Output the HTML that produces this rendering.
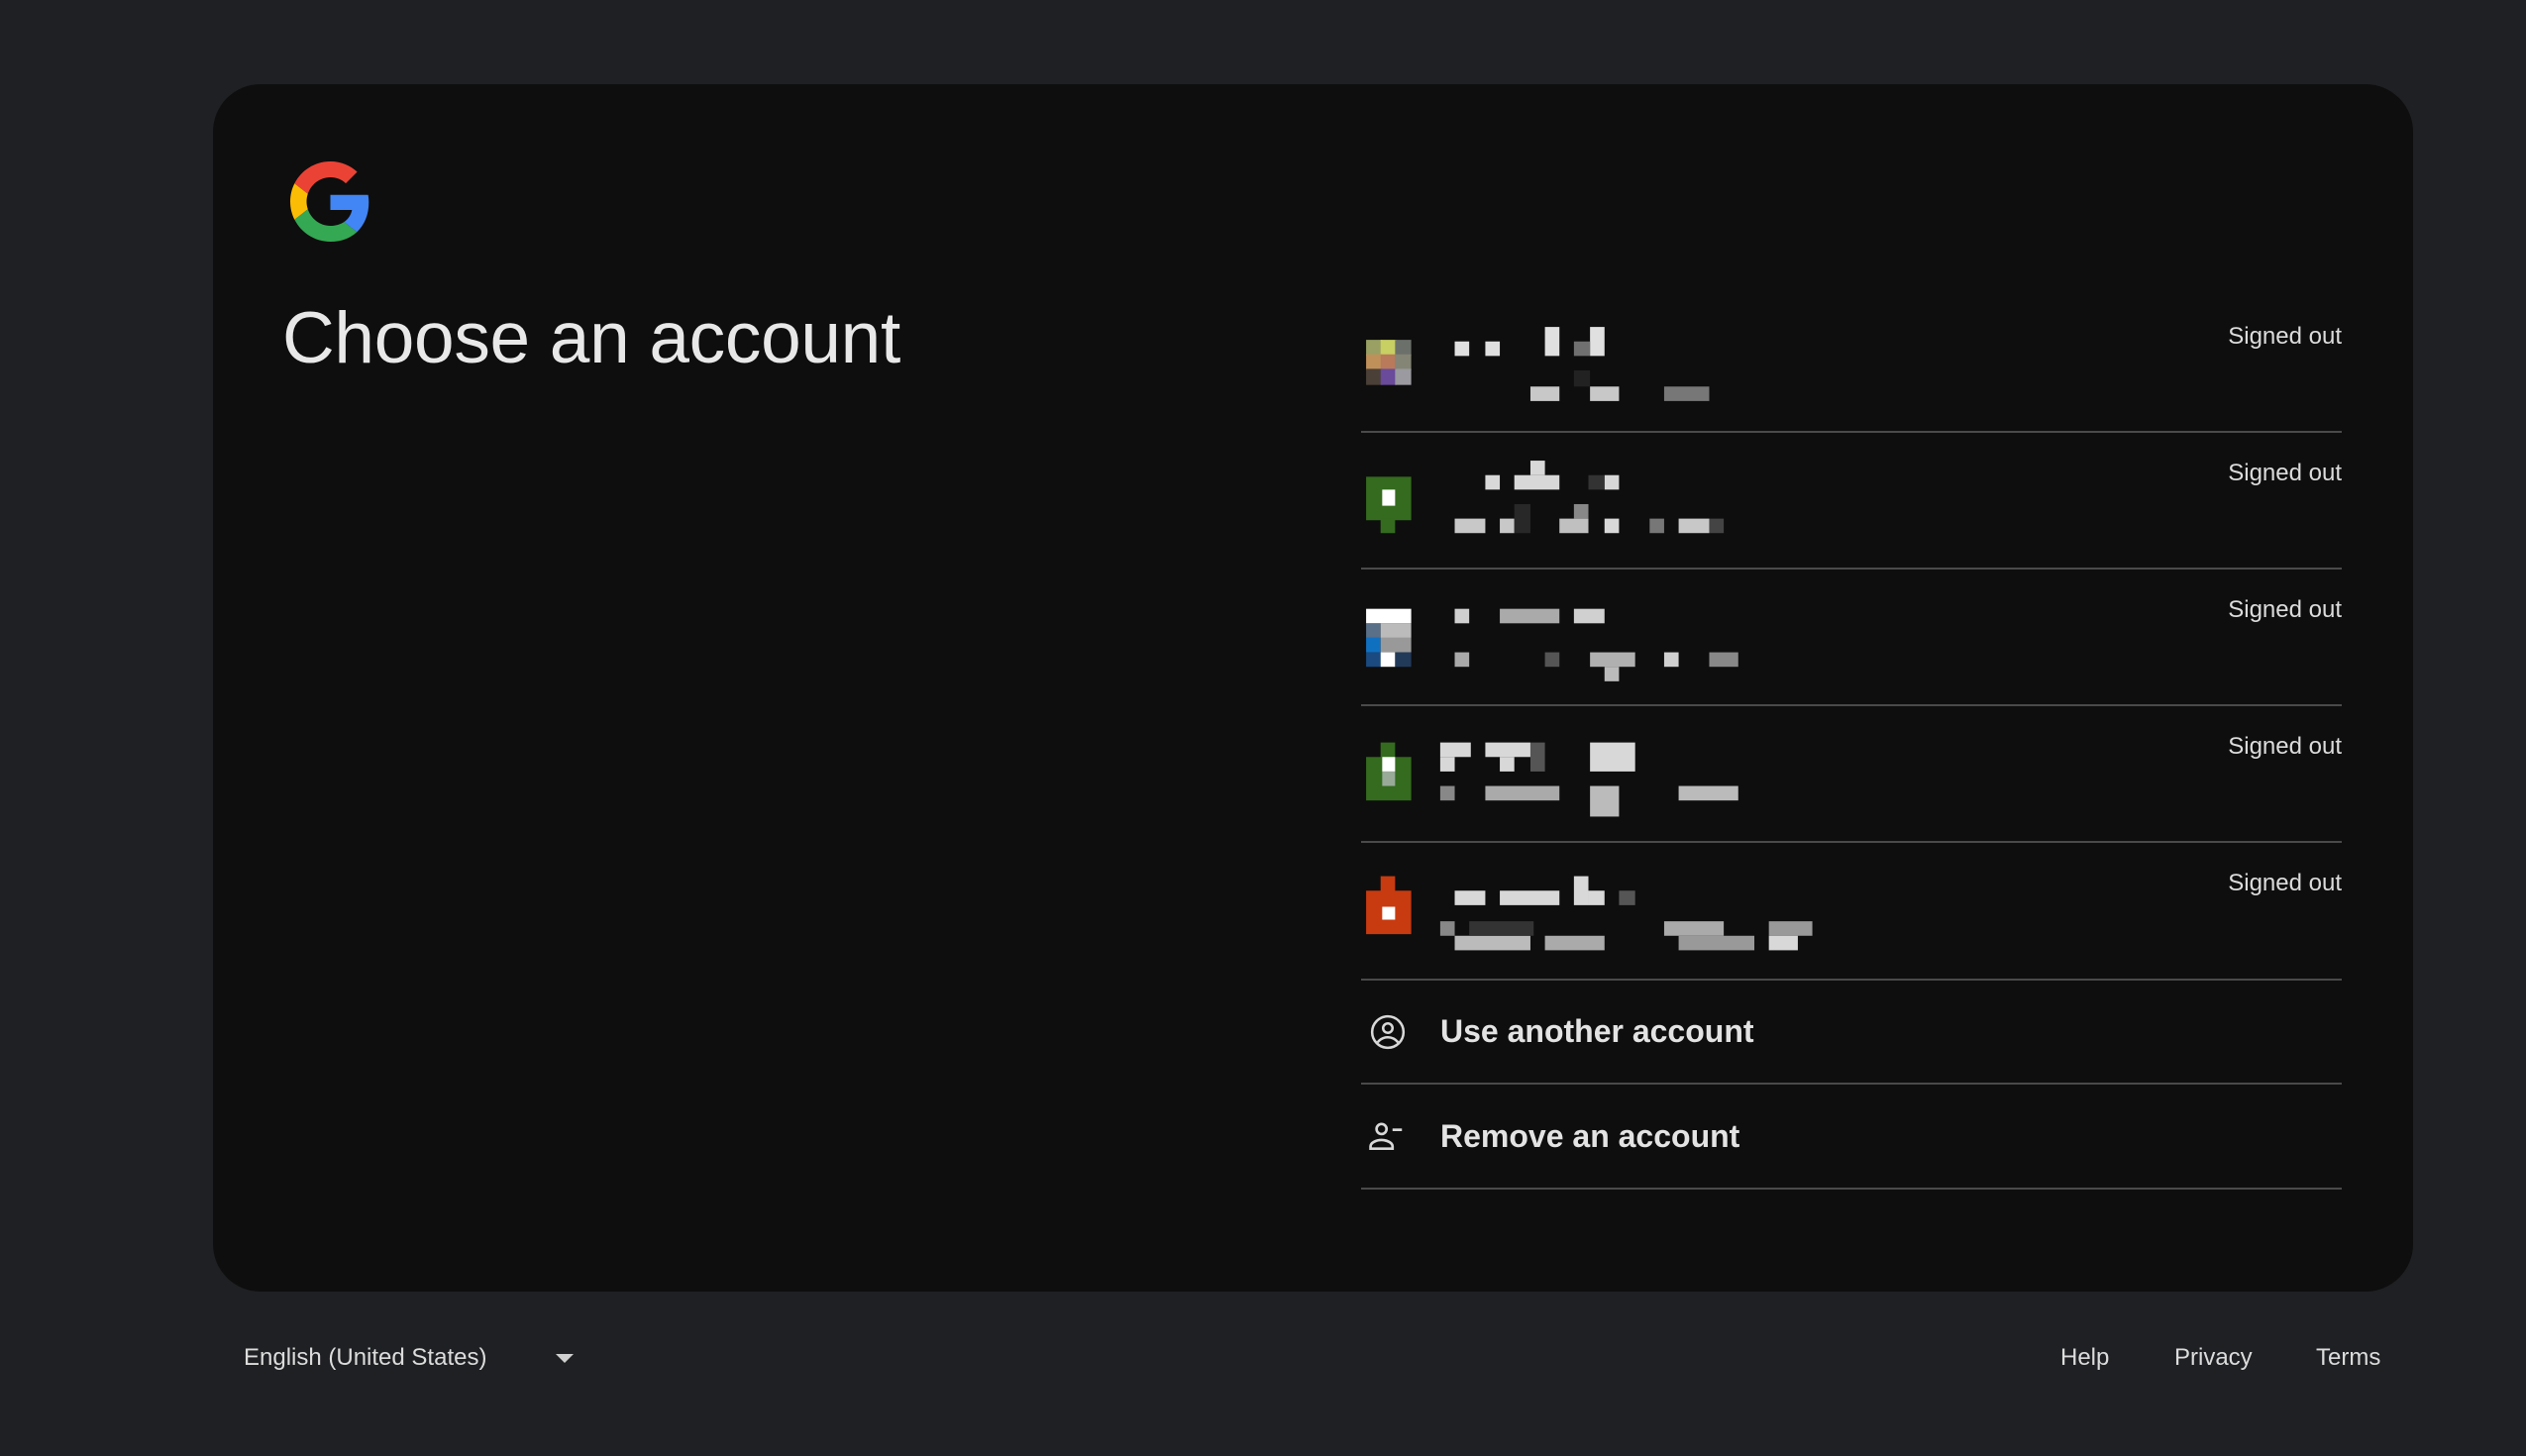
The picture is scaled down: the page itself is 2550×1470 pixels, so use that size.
<!DOCTYPE html>
<html><head><meta charset="utf-8"><style>
html,body{margin:0;padding:0;background:#1f2023;width:2550px;height:1470px;overflow:hidden;font-family:"Liberation Sans",Arial,sans-serif;color:#e3e3e3}
.card{position:absolute;left:215px;top:85px;width:2221px;height:1219px;background:#0e0e0e;border-radius:48px}
.abs{position:absolute}
.title{left:285px;top:300px;font-size:73px;color:#e8e8e8;white-space:nowrap;letter-spacing:-0.3px}
.line{position:absolute;left:1374px;width:990px;height:2px;background:#4a4a4a}
.so{position:absolute;right:186px;font-size:24px;color:#dcdcdc}
.act{position:absolute;left:1454px;font-size:32px;font-weight:bold;color:#e3e3e3}
.foot{position:absolute;top:1357px;font-size:24px;color:#dcdcdc}
</style></head><body>
<div class="card"></div>
<svg class="abs" style="left:293px;top:163px" width="81" height="81" viewBox="0 0 48 48">
<path fill="#EA4335" d="M24 9.5c3.54 0 6.71 1.22 9.21 3.6l6.85-6.850C35.9 2.380 30.47 0 24 0 14.62 0 6.51 5.38 2.56 13.22l7.98 6.19C12.43 13.72 17.74 9.5 24 9.5z"/>
<path fill="#4285F4" d="M46.98 24.55c0-1.57-.15-3.09-.38-4.55H24v9.02h12.94c-.58 2.96-2.26 5.48-4.78 7.18l7.73 6c4.51-4.18 7.09-10.36 7.090-17.650z"/>
<path fill="#FBBC05" d="M10.53 28.59c-.48-1.45-.76-2.99-.76-4.59s.27-3.14.76-4.59l-7.98-6.19C.92 16.46 0 20.12 0 24c0 3.88.92 7.54 2.56 10.78l7.97-6.19z"/>
<path fill="#34A853" d="M24 48c6.48 0 11.93-2.13 15.89-5.81l-7.73-6c-2.15 1.45-4.92 2.3-8.16 2.3-6.26 0-11.57-4.22-13.47-9.91l-7.98 6.19C6.51 42.62 14.62 48 24 48z"/>
</svg>
<div class="abs title">Choose an account</div>

<div class="line" style="top:435px"></div>
<div class="line" style="top:573px"></div>
<div class="line" style="top:711px"></div>
<div class="line" style="top:849px"></div>
<div class="line" style="top:988px"></div>
<div class="line" style="top:1093px"></div>
<div class="line" style="top:1199px"></div>

<div class="so" style="top:326px">Signed out</div>
<div class="so" style="top:464px">Signed out</div>
<div class="so" style="top:602px">Signed out</div>
<div class="so" style="top:740px">Signed out</div>
<div class="so" style="top:878px">Signed out</div>

<svg class="abs" style="left:0;top:0" width="2550" height="1470" viewBox="0 0 1568 904" preserveAspectRatio="none">
<rect x="848" y="211" width="10" height="10" fill="#9aa063"/><rect x="857" y="211" width="10" height="10" fill="#c8cf63"/><rect x="866" y="211" width="10" height="10" fill="#6b706b"/>
<rect x="848" y="220" width="10" height="10" fill="#c0905a"/><rect x="857" y="220" width="10" height="10" fill="#b87a5a"/><rect x="866" y="220" width="10" height="10" fill="#858575"/>
<rect x="848" y="229" width="10" height="10" fill="#4a4038"/><rect x="857" y="229" width="10" height="10" fill="#6a4a9a"/><rect x="866" y="229" width="10" height="10" fill="#9a9aa0"/>
<g fill="#e0e0e0">
<rect x="903" y="212" width="9" height="9"/><rect x="922" y="212" width="9" height="9"/><rect x="959" y="203" width="9" height="18"/><rect x="987" y="203" width="9" height="18"/>
<rect x="950" y="240" width="18" height="9" fill="#c8c8c8"/><rect x="987" y="240" width="18" height="9" fill="#c8c8c8"/></g>
<rect x="977" y="212" width="10" height="9" fill="#707070"/><rect x="977" y="230" width="10" height="10" fill="#222"/><rect x="1033" y="240" width="28" height="9" fill="#777"/>
<rect x="848" y="296" width="28" height="27" fill="#346b1e"/><rect x="857" y="322" width="9" height="9" fill="#346b1e"/><rect x="858" y="304" width="8" height="10" fill="#fff"/>
<g fill="#d8d8d8"><rect x="922" y="295" width="9" height="9"/><rect x="940" y="295" width="28" height="9"/><rect x="950" y="286" width="9" height="9"/><rect x="996" y="295" width="9" height="9"/>
<rect x="903" y="322" width="19" height="9" fill="#c8c8c8"/><rect x="931" y="322" width="9" height="9" fill="#c8c8c8"/><rect x="968" y="322" width="18" height="9" fill="#c0c0c0"/><rect x="996" y="322" width="9" height="9"/><rect x="1042" y="322" width="19" height="9" fill="#c8c8c8"/></g>
<rect x="986" y="295" width="10" height="9" fill="#333"/><rect x="940" y="313" width="10" height="18" fill="#282828"/><rect x="977" y="313" width="9" height="9" fill="#888"/><rect x="1024" y="322" width="9" height="9" fill="#777"/><rect x="1061" y="322" width="9" height="9" fill="#444"/>
<rect x="848" y="378" width="28" height="9" fill="#fff"/><rect x="848" y="387" width="9" height="9" fill="#5a7088"/><rect x="857" y="387" width="19" height="9" fill="#bbb"/>
<rect x="848" y="396" width="9" height="9" fill="#1070c0"/><rect x="857" y="396" width="19" height="9" fill="#999"/><rect x="848" y="405" width="9" height="9" fill="#1a4a80"/><rect x="857" y="405" width="9" height="9" fill="#fff"/><rect x="866" y="405" width="10" height="9" fill="#223a5a"/>
<g fill="#d0d0d0"><rect x="903" y="378" width="9" height="9"/><rect x="931" y="378" width="37" height="9" fill="#aaa"/><rect x="977" y="378" width="19" height="9"/>
<rect x="903" y="405" width="9" height="9" fill="#aaa"/><rect x="959" y="405" width="9" height="9" fill="#555"/><rect x="987" y="405" width="28" height="9" fill="#b0b0b0"/><rect x="996" y="414" width="9" height="9" fill="#bbb"/><rect x="1033" y="405" width="9" height="9"/><rect x="1061" y="405" width="18" height="9" fill="#888"/></g>
<rect x="848" y="470" width="28" height="27" fill="#346b1e"/><rect x="857" y="461" width="9" height="10" fill="#346b1e"/><rect x="858" y="470" width="8" height="9" fill="#fff"/><rect x="858" y="479" width="8" height="9" fill="#9a9"/>
<g fill="#d8d8d8"><rect x="894" y="461" width="19" height="9"/><rect x="894" y="470" width="9" height="9"/><rect x="922" y="461" width="28" height="9"/><rect x="931" y="470" width="9" height="9"/><rect x="950" y="461" width="9" height="18" fill="#555"/><rect x="987" y="461" width="28" height="18"/>
<rect x="894" y="488" width="9" height="9" fill="#888"/><rect x="922" y="488" width="46" height="9" fill="#aaa"/><rect x="987" y="488" width="18" height="19" fill="#bbb"/><rect x="1042" y="488" width="37" height="9" fill="#bbb"/></g>
<rect x="848" y="553" width="28" height="27" fill="#c83a10"/><rect x="857" y="544" width="9" height="10" fill="#c83a10"/><rect x="858" y="563" width="8" height="8" fill="#fff"/>
<g fill="#d8d8d8"><rect x="903" y="553" width="19" height="9"/><rect x="931" y="553" width="37" height="9"/><rect x="977" y="544" width="9" height="18"/><rect x="986" y="553" width="10" height="9"/><rect x="1005" y="553" width="10" height="9" fill="#555"/>
<rect x="894" y="572" width="9" height="9" fill="#888"/><rect x="903" y="581" width="47" height="9" fill="#bbb"/><rect x="912" y="572" width="40" height="9" fill="#333"/><rect x="959" y="581" width="37" height="9" fill="#aaa"/><rect x="1033" y="572" width="37" height="9" fill="#aaa"/><rect x="1042" y="581" width="47" height="9" fill="#999"/><rect x="1098" y="572" width="27" height="9" fill="#999"/><rect x="1098" y="581" width="18" height="9"/></g>
</svg>

<svg class="abs" style="left:1382px;top:1023px" width="38" height="38" viewBox="0 0 24 24" fill="none" stroke="#d8d8d8" stroke-width="1.6">
<circle cx="12" cy="12" r="10"/><circle cx="12" cy="9.5" r="3"/><path d="M5.5 18.5c1.8-2.2 4-3.2 6.5-3.2s4.7 1 6.5 3.2"/></svg>
<div class="act" style="top:1023px">Use another account</div>
<svg class="abs" style="left:1380px;top:1128px" width="42" height="38" viewBox="0 0 26 24" fill="none" stroke="#d8d8d8" stroke-width="1.7">
<circle cx="9" cy="7.5" r="3.2"/><path d="M2 20v-1.5c0-2.2 3.5-4 7-4s7 1.8 7 4V20z"/><path d="M16 8h6"/></svg>
<div class="act" style="top:1129px">Remove an account</div>

<div class="foot" style="left:246px">English (United States)</div>
<svg class="abs" style="left:561px;top:1367px" width="18" height="10"><path d="M0 0h18L9 9z" fill="#d0d0d0"/></svg>
<div class="foot" style="left:2080px">Help</div>
<div class="foot" style="left:2195px">Privacy</div>
<div class="foot" style="left:2338px">Terms</div>
</body></html>
